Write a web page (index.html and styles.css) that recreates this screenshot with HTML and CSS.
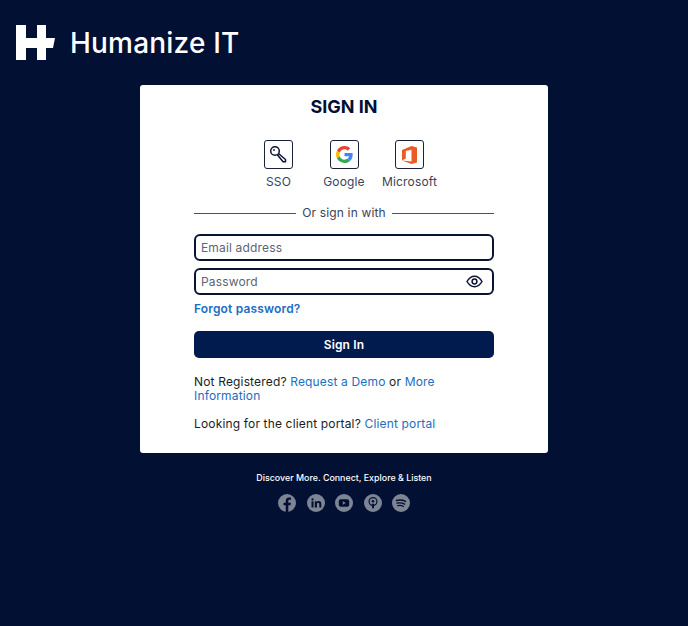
FILE: index.html
```html
<!DOCTYPE html>
<html lang="en">
<head>
    <meta charset="UTF-8">
    <meta name="viewport" content="width=device-width, initial-scale=1">
    <title>Sign in - Humanize IT</title>
    <link rel="stylesheet" href="styles.css">
</head>
<body>

<header class="brand">
    <svg class="brand-mark" width="39" height="35" viewBox="0 0 39 35">
        <path fill="#fff" d="M0 0h10v35H0zM10 13h11V0h9v13h9l-2 10h-7v12h-9V23H10z"/>
    </svg>
    <span class="brand-name">Humanize IT</span>
</header>

<main class="card">
    <h1>SIGN IN</h1>

    <div class="providers">
        <a class="provider" href="#">
            <span class="provider-icon">
                <svg width="19" height="19" viewBox="0 0 19 19" fill="none" stroke="#0b1433" stroke-width="1.5">
                    <circle cx="6" cy="6" r="4.3"/>
                    <path d="M9.500 8.500l7 6v2.300h-2.400L8.500 10" stroke-linejoin="round"/>
                    <circle cx="5" cy="5" r="0.9" fill="#0b1433" stroke="none"/>
                </svg>
            </span>
            SSO
        </a>
        <a class="provider" href="#">
            <span class="provider-icon">
                <svg width="17" height="17" viewBox="0 0 48 48">
                    <path fill="#ea4335" d="M24 9.500c3.500 0 6.700 1.200 9.200 3.600l6.900-6.900C35.900 2.400 30.500 0 24 0 14.600 0 6.500 5.400 2.600 13.200l8 6.200C12.500 13.700 17.800 9.500 24 9.500z"/>
                    <path fill="#4285f4" d="M47 24.500c0-1.600-.1-3.100-.4-4.500H24v9h12.900c-.6 3-2.200 5.500-4.700 7.200l7.700 6c4.500-4.200 7.100-10.300 7.100-17.700z"/>
                    <path fill="#fbbc05" d="M10.600 28.600c-.5-1.500-.8-3-.8-4.600s.3-3.100.8-4.600l-8-6.200C.9 16.500 0 20.100 0 24s.9 7.500 2.600 10.800l8-6.200z"/>
                    <path fill="#34a853" d="M24 48c6.500 0 11.900-2.100 15.900-5.800l-7.700-6c-2.200 1.400-4.900 2.300-8.200 2.300-6.200 0-11.500-4.200-13.400-9.900l-8 6.200C6.500 42.600 14.600 48 24 48z"/>
                </svg>
            </span>
            Google
        </a>
        <a class="provider" href="#">
            <span class="provider-icon">
                <svg width="15" height="18" viewBox="0 0 15 18">
                    <path fill="#eb5a24" d="M0 4l9.500-4L15 1.500v15L9.500 18 0 14.500l9.500 1V3.800L3.800 5v7.500L0 14.500z"/>
                </svg>
            </span>
            Microsoft
        </a>
    </div>

    <div class="divider"><span>Or sign in with</span></div>

    <form class="login-form">
        <input class="field" type="text" placeholder="Email address">
        <div class="password-wrap">
            <input class="field" type="password" placeholder="Password">
            <svg class="eye" width="17" height="13" viewBox="0 0 17 13" fill="none" stroke="#0b1433" stroke-width="1.500">
                <path d="M1 6.500C3 3 5.500 1.300 8.500 1.300S14 3 16 6.500C14 10 11.500 11.700 8.500 11.700S3 10 1 6.500z"/>
                <circle cx="8.500" cy="6.500" r="2.400"/>
            </svg>
        </div>
        <a class="forgot" href="#">Forgot password?</a>
        <button class="submit" type="button">Sign In</button>
    </form>

    <p class="note">Not Registered? <a href="#">Request a Demo</a> or <a href="#">More</a> <a href="#">Information</a></p>
    <p class="note">Looking for the client portal? <a href="#">Client portal</a></p>
</main>

<footer class="social">
    <p>Discover More. Connect, Explore &amp; Listen</p>
    <div class="social-icons">
        <svg width="18" height="18" viewBox="0 0 18 18">
            <circle cx="9" cy="9" r="9" fill="#7d8494"/>
            <path fill="#020f33" d="M10.300 18v-6.700h2.200l.4-2.600h-2.600V7.100c0-.8.300-1.300 1.400-1.300H13V3.500c-.3 0-1-.1-1.900-.1-2 0-3.400 1.200-3.400 3.400v1.900H5.500v2.600h2.200V18z"/>
        </svg>
        <svg width="18" height="18" viewBox="0 0 18 18">
            <circle cx="9" cy="9" r="9" fill="#7d8494"/>
            <path fill="#020f33" d="M4.500 7.300h2v6.300h-2zM5.500 4.300a1.150 1.150 0 1 1 0 2.300 1.150 1.150 0 0 1 0-2.300zM7.800 7.300h1.900v.9c.4-.6 1.100-1.100 2.100-1.100 2 0 2.500 1.300 2.500 3.100v3.400h-2v-3c0-.8-.1-1.800-1.100-1.800s-1.300.8-1.300 1.700v3.100h-2.100z"/>
        </svg>
        <svg width="18" height="18" viewBox="0 0 18 18">
            <circle cx="9" cy="9" r="9" fill="#7d8494"/>
            <rect x="3.800" y="5.200" width="10.400" height="7.600" rx="2" fill="#020f33"/>
            <path fill="#7d8494" d="M7.800 7.300v3.400L10.700 9z"/>
        </svg>
        <svg width="18" height="18" viewBox="0 0 18 18">
            <circle cx="9" cy="9" r="9" fill="#7d8494"/>
            <circle cx="9" cy="7.500" r="3.900" fill="none" stroke="#020f33" stroke-width="1.200"/>
            <circle cx="9" cy="7.300" r="1.300" fill="#020f33"/>
            <rect x="8" y="9.500" width="2" height="5" rx="1" fill="#020f33"/>
        </svg>
        <svg width="18" height="18" viewBox="0 0 18 18">
            <circle cx="9" cy="9" r="9" fill="#7d8494"/>
            <path fill="none" stroke="#020f33" stroke-linecap="round" stroke-width="1.500" d="M4.500 6.500c3-.8 6.200-.6 9 .9"/>
            <path fill="none" stroke="#020f33" stroke-linecap="round" stroke-width="1.300" d="M5 9.200c2.600-.6 5.200-.4 7.600.9"/>
            <path fill="none" stroke="#020f33" stroke-linecap="round" stroke-width="1.100" d="M5.500 11.700c2-.5 4.200-.3 6 .7"/>
        </svg>
    </div>
</footer>

</body>
</html>
```

FILE: styles.css
```css
body {
    margin: 0;
    min-height: 626px;
    background-color: #021034;
    font-family: Inter, "Liberation Sans", sans-serif;
    color: #0b1433;
}

a {
    color: #1b6ec2;
    text-decoration: none;
}

.brand {
    display: flex;
    align-items: center;
    gap: 15px;
    height: 35px;
    padding: 25px 0 25px 16px;
}

.brand-name {
    color: #fff;
    font-size: 28px;
    font-weight: 500;
    letter-spacing: 0.2px;
}

.card {
    box-sizing: border-box;
    width: 408px;
    height: 368px;
    margin: 0 auto;
    padding: 11px 54px 0;
    background-color: #fff;
    border-radius: 3px;
}

h1 {
    margin: 0 0 23px;
    text-align: center;
    font-size: 18px;
    line-height: 21px;
    font-weight: 700;
    color: #021034;
}

.providers {
    display: flex;
    justify-content: center;
    margin-bottom: 15px;
}

.provider {
    display: flex;
    flex-direction: column;
    align-items: center;
    gap: 5px;
    width: 65.500px;
    font-size: 12px;
    letter-spacing: 0.16px;
    line-height: 16px;
    color: #3a4258;
}

.provider-icon {
    display: flex;
    align-items: center;
    justify-content: center;
    box-sizing: border-box;
    width: 29px;
    height: 29px;
    border: 1px solid #1a2238;
    border-radius: 3px;
}

.divider {
    display: flex;
    align-items: center;
    gap: 6px;
    margin-bottom: 13px;
    font-size: 12px;
    letter-spacing: 0.16px;
    line-height: 16px;
    color: #3a4258;
}

.divider::before,
.divider::after {
    content: "";
    flex: 1;
    height: 1px;
    background-color: #4a5165;
}

.login-form {
    display: flex;
    flex-direction: column;
}

.field {
    box-sizing: border-box;
    width: 100%;
    height: 27px;
    padding: 0 5px;
    border: 2px solid #0b1433;
    border-radius: 6px;
    font-family: inherit;
    font-size: 12px;
    letter-spacing: 0.16px;
}

.field::placeholder {
    color: #5b6478;
    opacity: 1;
}

.password-wrap {
    position: relative;
    margin-top: 7px;
}

.eye {
    position: absolute;
    top: 7px;
    right: 11px;
}

.forgot {
    margin-top: 6px;
    font-size: 12px;
    letter-spacing: 0.16px;
    line-height: 16px;
    font-weight: 600;
}

.submit {
    height: 27px;
    margin-top: 14px;
    padding: 0;
    border: none;
    border-radius: 5px;
    background-color: #021b4e;
    color: #fff;
    font-family: inherit;
    font-size: 12px;
    letter-spacing: 0.16px;
    font-weight: 600;
}

.note {
    margin: 17px 0 0;
    font-size: 12px;
    letter-spacing: 0.16px;
    line-height: 14px;
    color: #1a1d26;
}

.note + .note {
    margin-top: 14px;
}

.social {
    text-align: center;
    color: #fff;
}

.social p {
    margin: 19px 0 10px;
    font-size: 8.900px;
    line-height: 12px;
    font-weight: 500;
}

.social-icons {
    display: flex;
    justify-content: center;
    gap: 10.500px;
}
```
